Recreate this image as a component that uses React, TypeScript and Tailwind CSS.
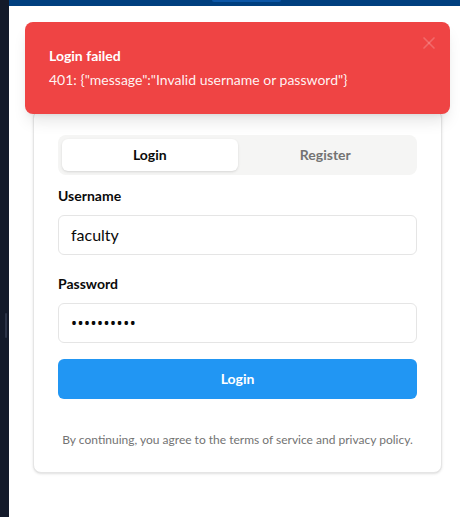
import { X } from "lucide-react";

export default function App() {
  return (
    <div
      className="flex h-[517px] w-[460px] overflow-hidden bg-white"
      style={{ fontFamily: 'Lato, "Noto Sans", sans-serif' }}
    >
      {/* dark side strip */}
      <div className="flex w-[9px] shrink-0 flex-col bg-[#131a2a] pt-[313px]">
        <div className="ml-[5px] h-[25px] w-[2px] rounded bg-[#2b3347]" />
      </div>

      <div className="relative flex min-w-0 flex-1 flex-col">
        {/* header bottom edge */}
        <div className="h-[6px] shrink-0 bg-[#003f7f]">
          <div className="ml-[203px] h-[2px] w-[69px] rounded-b bg-[#0b56a6]" />
        </div>

        {/* card */}
        <div className="ml-6 mt-[104px] w-[409px] rounded-lg border border-[#e5e5e5] bg-white p-6 shadow-sm">
          <div className="flex h-10 rounded-lg bg-[#f5f5f4] p-1">
            <button className="flex-1 rounded-md bg-white text-sm font-bold text-[#0a0a0a] shadow-sm">
              Login
            </button>
            <button className="flex-1 rounded-md text-sm font-bold text-[#737373]">
              Register
            </button>
          </div>

          <label className="mt-[11px] block text-sm font-bold leading-5 text-[#0a0a0a]">
            Username
          </label>
          <div className="mt-[9px] flex h-10 items-center rounded-md border border-[#e5e5e5] px-3 text-base text-[#0a0a0a]">
            faculty
          </div>

          <label className="mt-[19px] block text-sm font-bold leading-5 text-[#0a0a0a]">
            Password
          </label>
          <div className="mt-[9px] flex h-10 items-center rounded-md border border-[#e5e5e5] px-3 font-['Noto_Sans'] text-base tracking-[0.5px] text-[#0a0a0a]">
            ••••••••••
          </div>

          <button className="mt-4 flex h-10 w-full items-center justify-center rounded-md bg-[#2196f3] text-sm font-bold text-white">
            Login
          </button>

          <p className="mt-[33px] whitespace-nowrap text-center text-xs leading-4 text-[#737373]">
            By continuing, you agree to the terms of service and privacy policy.
          </p>
        </div>

        {/* toast */}
        <div className="absolute right-[10px] top-[22px] w-[425px] rounded-lg bg-[#ef4444] p-6 text-white shadow-lg">
          <div className="text-sm font-bold leading-5">Login failed</div>
          <div className="mt-1 text-sm leading-5 text-white/95">
            401: {'{"message":"Invalid username or password"}'}
          </div>
          <X className="absolute right-[11px] top-[11px] h-5 w-5 text-white/20" strokeWidth={2} />
        </div>
      </div>
    </div>
  );
}
